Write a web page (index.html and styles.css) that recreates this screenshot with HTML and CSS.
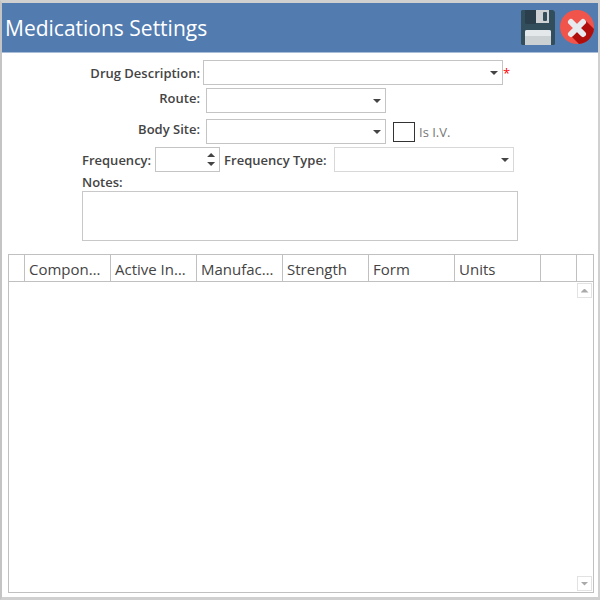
FILE: index.html
```html
<!DOCTYPE html>
<html lang="en">
<head>
  <meta charset="utf-8" />
  <meta name="viewport" content="width=device-width, initial-scale=1" />
  <title>Medications Settings</title>
  <link rel="stylesheet" href="styles.css">
</head>
<body>
  <div class="window">

    <header class="titlebar">
      <h1>Medications Settings</h1>
      <button type="button" class="icon-button" title="Save" aria-label="Save">
        <svg width="36" height="36" viewBox="0 0 36 36">
          <path fill="#324d5b" d="M2 0h31l2 2v32l-1 1H2l-1-1V1z" />
          <path fill="#2b3e4b" d="M5 0h11v14H6l-1-1z" />
          <path fill="#ced2d5" d="M16 0h13v13H16z" />
          <rect x="23" y="2" width="4" height="9" rx="1" fill="#324d5b" />
          <path fill="#cbd0d3" d="M5 35V22q0-2 2-2h22q2 0 2 2v13z" />
          <path fill="#e4e8eb" d="M5 26v-4q0-2 2-2h22q2 0 2 2v4z" />
        </svg>
      </button>
      <button type="button" class="icon-button" title="Close" aria-label="Close">
        <svg width="36" height="36" viewBox="0 0 36 36">
          <circle cx="18" cy="17" r="17" fill="#f1544b" />
          <path fill="#b00d0d" d="M26 10L35 19A17 17 0 0 1 20 34L10 24z" />
          <path stroke="#e6e9ee" stroke-width="6" stroke-linecap="round" d="M12 12l12 12M24 12L12 24" />
        </svg>
      </button>
    </header>

    <form class="fields">
      <div class="row">
        <label class="side-label" for="drug">Drug Description:</label>
        <span class="combo combo-wide"><select id="drug" required><option></option></select></span>
        <span class="required">*</span>
      </div>
      <div class="row row-inset">
        <label class="side-label" for="route">Route:</label>
        <span class="combo"><select id="route"><option></option></select></span>
      </div>
      <div class="row row-inset row-spaced">
        <label class="side-label" for="site">Body Site:</label>
        <span class="combo"><select id="site"><option></option></select></span>
        <label class="check"><input type="checkbox" />Is I.V.</label>
      </div>
      <div class="row row-frequency">
        <label for="frequency">Frequency:</label>
        <span class="spinner">
          <input type="text" inputmode="numeric" id="frequency" />
          <span class="spinner-buttons">
            <button type="button" class="up" aria-label="Increase"></button>
            <button type="button" class="down" aria-label="Decrease"></button>
          </span>
        </span>
        <label for="frequency-type">Frequency Type:</label>
        <span class="combo combo-light"><select id="frequency-type"><option></option></select></span>
      </div>
      <label class="notes-label" for="notes">Notes:</label>
      <textarea id="notes"></textarea>
    </form>

    <div class="grid">
      <table>
        <colgroup>
          <col class="col-marker" />
          <col class="col-data" span="6" />
          <col />
          <col class="col-marker" />
        </colgroup>
        <thead>
          <tr>
            <th></th>
            <th>Component</th>
            <th>Active Ingredient</th>
            <th>Manufacturer</th>
            <th>Strength</th>
            <th>Form</th>
            <th>Units</th>
            <th></th>
            <th></th>
          </tr>
        </thead>
      </table>
      <div class="scrollbar">
        <button type="button" class="up" aria-label="Scroll up"></button>
        <button type="button" class="down" aria-label="Scroll down"></button>
      </div>
    </div>

  </div>
</body>
</html>
```
FILE: styles.css
```css
* { box-sizing: border-box; }
html, body { margin: 0; padding: 0; }
body { background: #fff; color: #444; font-family: "Open Sans", "Noto Sans", sans-serif; font-size: 13px; line-height: 18px; }
button, input, select, textarea { font: inherit; color: inherit; margin: 0; padding: 0; border-radius: 0; }
button { background: none; border: none; cursor: pointer; }

.window { display: flex; flex-direction: column; min-height: 100vh; border: 3px solid #d0d0d0; border-left: 2px solid #c4c4c4; border-right-width: 2px; }

.titlebar { display: flex; align-items: center; gap: 3px; height: 50px; padding: 0 3px; background: #527bb0; border-bottom: 1px solid #a9bdd8; }
.titlebar h1 { flex: 1; margin: 0; color: #fff; font-size: 21px; line-height: 30px; font-weight: normal; }
.icon-button { width: 36px; height: 36px; }
.icon-button svg { display: block; }

.fields { width: 436px; max-width: 100%; margin: 7px auto 0; }
.fields label { font-weight: 600; }
.row { display: flex; align-items: center; gap: 3px; margin-bottom: 3px; }
.row-inset { gap: 6px; }
.row-inset .side-label { padding-bottom: 6px; }
.row-spaced { margin-top: 6px; }
.side-label { width: 118px; text-align: right; }

.combo { position: relative; width: 180px; }
.combo-wide { width: 300px; }
.combo select { display: block; width: 100%; height: 25px; padding: 0 20px 0 4px; appearance: none; background: #fff; border: 1px solid #c4c4c4; }
.combo-light select { border-color: #d8d8d8; }
.combo::after { content: ""; position: absolute; right: 5px; top: 11px; border: 4px solid transparent; border-top-color: #444; border-bottom: none; pointer-events: none; }
.required { margin-left: -3px; color: #f00; }

.fields .check { display: flex; align-items: center; gap: 4px; color: #777; font-weight: normal; }
.check input { width: 22px; height: 20px; margin-left: 1px; appearance: none; background: #fff; border: 1px solid #333; }
.check input:checked { background: #333; box-shadow: inset 0 0 0 4px #fff; }

.row-frequency { gap: 4px; margin-bottom: 1px; }
.row-frequency .combo { margin-left: auto; margin-right: 4px; }
.spinner { display: flex; width: 65px; height: 25px; border: 1px solid #c4c4c4; }
.spinner input { flex: 1; min-width: 0; padding-left: 4px; border: none; background: none; }
.spinner-buttons { display: flex; flex-direction: column; justify-content: center; gap: 5px; width: 16px; }
.spinner-buttons button { height: 4px; }
.up::before, .down::before { content: ""; display: block; width: 8px; height: 4px; margin: 0 auto; background: #444; }
.up::before { clip-path: polygon(50% 0, 100% 100%, 0 100%); }
.down::before { clip-path: polygon(0 0, 100% 0, 50% 100%); }

.notes-label { display: block; }
#notes { display: block; width: 100%; height: 50px; padding: 4px; resize: none; border: 1px solid #c8c8c8; }

.grid { flex: 1; display: flex; flex-direction: column; margin: 13px 4px 4px 6px; border: 1px solid #c0c0c0; }
.grid table { width: 100%; table-layout: fixed; border-collapse: separate; border-spacing: 0; }
.col-marker { width: 16px; }
.col-data { width: 86px; }
.grid th { height: 27px; padding: 2px 4px 0; overflow: hidden; text-overflow: ellipsis; white-space: nowrap; text-align: left; font-size: 15px; line-height: 20px; font-weight: normal; border-right: 1px solid #c0c0c0; border-bottom: 1px solid #c0c0c0; }
.grid th:first-child, .grid th:last-child { padding: 0; }
.grid th:last-child { border-right: none; }
.scrollbar { flex: 1; display: flex; flex-direction: column; justify-content: space-between; align-self: flex-end; margin: 1px; }
.scrollbar button { width: 15px; height: 15px; border: 1px solid #e2e2e2; }
.scrollbar button::before { background: #aaa; }
```
